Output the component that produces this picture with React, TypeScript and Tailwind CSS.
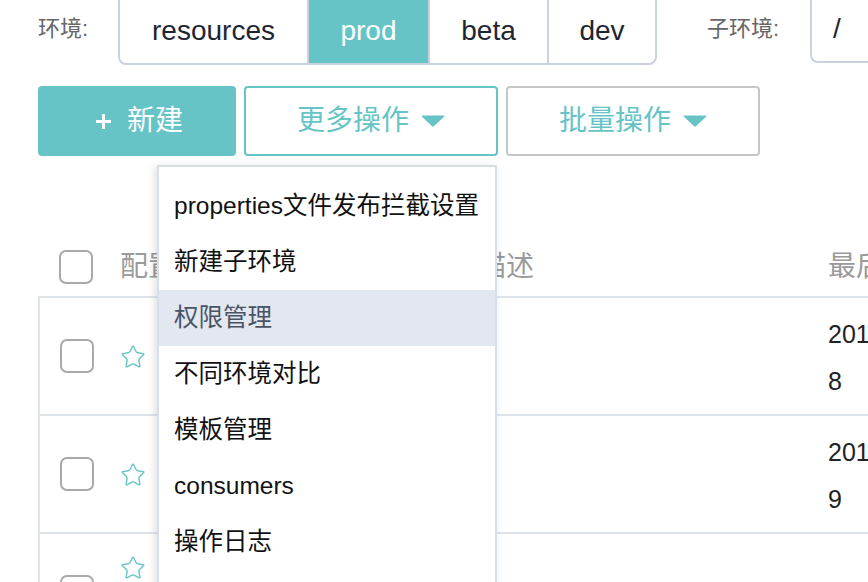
import React from "react";
import { Star } from "lucide-react";

const envs = ["resources", "prod", "beta", "dev"];
const envWidths: Record<string, string> = {
  resources: "w-[189px]",
  prod: "w-[121px]",
  beta: "w-[119px]",
  dev: "w-[106px]",
};

const menuItems = [
  "properties文件发布拦截设置",
  "新建子环境",
  "权限管理",
  "不同环境对比",
  "模板管理",
  "consumers",
  "操作日志",
];

function Caret({ className }: { className?: string }) {
  return (
    <svg width="24" height="12" viewBox="0 0 24 12" className={className}>
      <path d="M1.5 0.5 H22.5 Q24 0.5 23 1.7 L13.2 11 Q12 12 10.8 11 L1 1.7 Q0 0.5 1.5 0.5 Z" fill="#66c4c6" />
    </svg>
  );
}

function Checkbox() {
  return <div className="w-[34px] h-[34px] rounded-[7px] border-2 border-[#a9a9a9] bg-white shrink-0" />;
}

export default function App() {
  return (
    <div className="relative w-[868px] h-[582px] overflow-hidden bg-white font-['Liberation_Sans','Noto_Sans_CJK_SC',sans-serif]">
      {/* env row */}
      <div className="flex items-center pl-[38px] mt-[-7px] h-[72px]">
        <div className="w-[80px] shrink-0 text-[22px] text-[#666] leading-none">环境:</div>
        <div className="flex shrink-0 h-[72px] border-2 border-[#c9d2de] rounded-[8px] overflow-hidden">
          {envs.map((e, i) => (
            <div
              key={e}
              className={`${envWidths[e]} flex items-center justify-center text-[28px] pt-[3px] ${
                e === "prod" ? "bg-[#66c4c6] text-white" : "text-[#1e2633]"
              } ${i < envs.length - 1 ? "border-r-2 border-[#c9d2de]" : ""}`}
            >
              {e}
            </div>
          ))}
        </div>
        <div className="ml-[50px] w-[103px] shrink-0 text-[22px] text-[#666] leading-none">子环境:</div>
        <div className="flex-1 h-[70px] self-start border-2 border-r-0 border-[#c9d2de] rounded-bl-[8px] flex items-center pl-[21px] text-[28px] text-[#1e2633] pt-[2px]">
          /
        </div>
      </div>

      {/* action buttons */}
      <div className="flex gap-[8px] pl-[38px] mt-[21px]">
        <button className="w-[198px] h-[70px] rounded-[4px] bg-[#66c4c6] text-white text-[28px] flex items-center justify-center gap-[15px] pl-[4px]">
          <svg width="17" height="17" viewBox="0 0 17 17">
            <path d="M8.5 1 V16 M1 8.5 H16" stroke="white" strokeWidth="3" />
          </svg>
          <span>新建</span>
        </button>
        <button className="w-[254px] h-[70px] rounded-[4px] border-2 border-[#66c4c6] text-[#66c4c6] text-[28px] flex items-center justify-center gap-[12px]">
          <span>更多操作</span>
          <Caret />
        </button>
        <button className="w-[254px] h-[70px] rounded-[4px] border-2 border-[#c6c6c6] text-[#66c4c6] text-[28px] flex items-center justify-center gap-[12px]">
          <span>批量操作</span>
          <Caret />
        </button>
      </div>

      {/* table */}
      <div className="ml-[38px] mt-[82px]">
        <div className="flex items-center h-[60px] border-b-2 border-[#dfe4eb] text-[28px] text-[#9a9a9a] whitespace-nowrap">
          <div className="w-[82px] shrink-0 pl-[21px]">
            <Checkbox />
          </div>
          <div className="w-[358px] shrink-0">配置名称</div>
          <div className="w-[350px] shrink-0">描述</div>
          <div className="shrink-0">最后修改时间</div>
        </div>

        {[
          ["2019-08-16 14:22:4", "8"],
          ["2019-08-15 10:13:2", "9"],
        ].map((d, i) => (
          <div key={i} className="flex items-center h-[118px] border-l-2 border-b-2 border-[#dfe4eb]">
            <div className="w-[80px] shrink-0 pl-[20px]">
              <Checkbox />
            </div>
            <div className="w-[358px] shrink-0 flex items-center pt-[2px]">
              <Star size={26} strokeWidth={1.3} color="#66c4c6" />
            </div>
            <div className="w-[350px] shrink-0" />
            <div className="shrink-0 pt-[4px] text-[25px] leading-[47px] text-[#222] whitespace-nowrap">
              <div>{d[0]}</div>
              <div>{d[1]}</div>
            </div>
          </div>
        ))}

        <div className="flex items-start h-[140px] border-l-2 border-[#dfe4eb]">
          <div className="w-[80px] shrink-0 pl-[20px] pt-[41px]">
            <Checkbox />
          </div>
          <div className="w-[358px] shrink-0 pt-[21px]">
            <Star size={26} strokeWidth={1.3} color="#66c4c6" />
          </div>
        </div>
      </div>

      {/* dropdown menu */}
      <div className="absolute left-[157px] top-[165px] w-[340px] h-[440px] bg-white border-2 border-[#d9dfe8] pt-[11px] shadow-[-2px_2px_8px_rgba(60,70,90,0.18)]">
        {menuItems.map((m) => (
          <div
            key={m}
            className={`h-[56px] flex items-center pl-[15px] text-[24.5px] whitespace-nowrap ${
              m === "权限管理" ? "bg-[#e3e7f0] text-[#4a5466]" : "text-[#111]"
            }`}
          >
            {m}
          </div>
        ))}
      </div>
    </div>
  );
}
